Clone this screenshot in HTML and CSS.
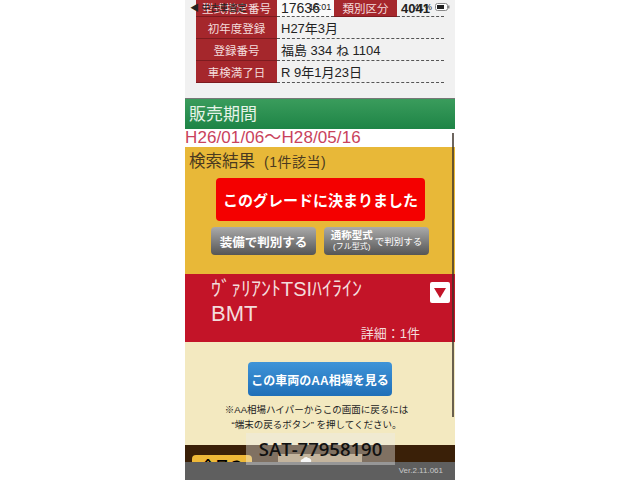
FILE: index.html
```html
<!DOCTYPE html>
<html lang="ja">
<head>
    <meta charset="UTF-8">
    <title>検索結果</title>
    <link rel="stylesheet" href="styles.css">
</head>
<body>
    <div class="phone">
        <!-- ステータスバー -->
        <div class="status">
            <span class="status-left">&#9664; 中古車査定</span>
            <span class="status-time">16:01</span>
            <span class="status-right">41%
                <svg class="battery" width="15" height="8" viewBox="0 0 15 8"><rect x="0.5" y="0.5" width="12" height="7" rx="2" fill="#fff" stroke="#888"/><rect x="2" y="2" width="7" height="4" fill="#222"/><rect x="13" y="2.5" width="1.5" height="3" fill="#888"/></svg>
            </span>
        </div>

        <!-- 車両情報 -->
        <div class="info">
            <div class="info-row info-first">
                <div class="info-label">型式指定番号</div>
                <div class="info-value info-short">17636</div>
                <div class="info-label info-label-2">類別区分</div>
                <div class="info-value info-num">4041</div>
            </div>
            <div class="info-row">
                <div class="info-label">初年度登録</div>
                <div class="info-value">H27年3月</div>
            </div>
            <div class="info-row">
                <div class="info-label">登録番号</div>
                <div class="info-value">福島 334 ね 1104</div>
            </div>
            <div class="info-row">
                <div class="info-label">車検満了日</div>
                <div class="info-value">R 9年1月23日</div>
            </div>
        </div>

        <h2 class="period-head">販売期間</h2>
        <div class="period">H26/01/06～H28/05/16</div>

        <!-- 検索結果 -->
        <div class="result">
            <div class="result-title">検索結果<small>(1件該当)</small></div>
            <button class="btn-decide">このグレードに決まりました</button>
            <div class="btn-row">
                <button class="btn-gray btn-equip">装備で判別する</button>
                <button class="btn-gray btn-type">
                    <span class="type-stack"><b>通称型式</b><small>(フル型式)</small></span>で判別する
                </button>
            </div>
        </div>

        <!-- グレード -->
        <div class="grade">
            <div class="grade-name">ｳﾞｧﾘｱﾝﾄTSIﾊｲﾗｲﾝ</div>
            <div class="grade-sub">BMT</div>
            <div class="grade-count">詳細：1件</div>
            <span class="grade-toggle"><svg width="14" height="12" viewBox="0 0 14 12"><path d="M1 1h12L7 11z" fill="#c31428"/></svg></span>
        </div>

        <div class="market">
            <button class="btn-market">この車両のAA相場を見る</button>
            <p class="market-note">※AA相場ハイパーからこの画面に戻るには<br>“端末の戻るボタン” を押してください。</p>
        </div>

        <!-- 下のメニュー -->
        <div class="bottom-brown">
            <span class="bottom-tab">今日の</span>
            <span class="bottom-center">
                <svg width="12" height="7" viewBox="0 0 12 7"><path d="M1 6c-1-2 1-3 2-3 1-2 4-3 5-1 2 0 4 2 3 4z" fill="#fff"/></svg>
            </span>
        </div>
        <div class="bottom-gray">Ver.2.11.061</div>
        <div class="scrollbar"></div>
        <div class="stamp">SAT-77958190</div>
    </div>
</body>
</html>
```

FILE: styles.css
```css
body {
    margin: 0;
    background-color: #fff;
    font-family: "Liberation Sans", "Noto Sans CJK JP", sans-serif;
}
.phone {
    position: relative;
    width: 270px;
    height: 480px;
    margin-left: 185px;
    overflow: hidden;
    background-color: #f1f1f1;
}
.status {
    position: absolute;
    top: 0;
    left: 0;
    right: 0;
    height: 14px;
    display: grid;
    grid-template-columns: 1fr auto 1fr;
    align-items: center;
    font-size: 9px;
    color: #222;
    z-index: 2;
}
.status-left {
    margin-left: 5px;
    white-space: nowrap;
}
.status-right {
    display: flex;
    align-items: center;
    justify-content: flex-end;
    gap: 3px;
    margin-right: 5px;
}
.info {
    height: 98px;
    padding: 0 11px;
    box-sizing: border-box;
}
.info-row {
    display: flex;
    height: 22px;
    font-size: 12px;
}
.info-first {
    height: 17px;
}
.info-label {
    width: 81px;
    flex: none;
    box-sizing: border-box;
    display: flex;
    align-items: center;
    justify-content: center;
    background-color: #a5272c;
    color: #f3dcdc;
    font-size: 11.5px;
    border-bottom: 1px solid #7c1b1f;
}
.info-label-2 {
    width: 63px;
}
.info-value {
    flex: 1;
    display: flex;
    align-items: center;
    padding-left: 4px;
    color: #222;
    font-size: 13px;
    border-bottom: 1px dashed #555;
}
.info-short {
    flex: none;
    width: 53px;
    background-color: #fafafa;
    font-size: 14px;
}
.info-num {
    font-weight: bold;
    padding-left: 4px;
}
.period-head {
    margin: 0;
    height: 30px;
    line-height: 32px;
    padding-left: 4px;
    border-top: 1px solid #777;
    background: linear-gradient(#3a9c5c, #1e8446);
    color: #e6f3e8;
    font-size: 17px;
    font-weight: normal;
}
.period {
    height: 18px;
    line-height: 18px;
    background-color: #fff;
    color: #c9425c;
    font-size: 17px;
    letter-spacing: 0.1px;
    white-space: nowrap;
}
.result {
    height: 127px;
    background-color: #e8b838;
    overflow: hidden;
}
.result-title {
    margin: 4px 0 0 4px;
    font-size: 16.5px;
    line-height: 20px;
    color: #4a3a20;
}
.result-title small {
    margin-left: 9px;
    font-size: 14px;
    letter-spacing: 0.5px;
}
button {
    font-family: inherit;
    border: none;
    padding: 0;
}
.btn-decide {
    display: block;
    width: 209px;
    height: 43px;
    margin: 6px 0 0 31px;
    border-radius: 4px;
    background-color: #f40000;
    color: #fff;
    font-size: 15px;
    font-weight: bold;
}
.btn-row {
    display: flex;
    gap: 8px;
    margin: 6px 0 0 26px;
}
.btn-gray {
    height: 28px;
    border-radius: 4px;
    background: linear-gradient(#aaa, #555);
    color: #fff;
    font-size: 12.5px;
    font-weight: bold;
    display: flex;
    align-items: center;
    justify-content: center;
}
.btn-equip {
    width: 105px;
}
.btn-type {
    width: 105px;
    gap: 2px;
    font-size: 9.5px;
    font-weight: normal;
}
.type-stack {
    display: flex;
    flex-direction: column;
    align-items: center;
    line-height: 11px;
}
.type-stack b {
    font-size: 10.5px;
}
.type-stack small {
    font-size: 8px;
}
.grade {
    position: relative;
    height: 68px;
    background-color: #c31428;
    color: #f3dcdc;
}
.grade-name {
    padding: 3px 0 0 26px;
    font-size: 20px;
    line-height: 24px;
    white-space: nowrap;
}
.grade-sub {
    padding-left: 26px;
    font-size: 22px;
    line-height: 25px;
}
.grade-count {
    position: absolute;
    right: 35px;
    bottom: 0;
    font-size: 13px;
}
.grade-toggle {
    position: absolute;
    top: 8px;
    right: 5px;
    width: 20px;
    height: 21px;
    border-radius: 2px;
    background-color: #fff;
    display: flex;
    align-items: center;
    justify-content: center;
}
.market {
    height: 103px;
    background-color: #f3e9c0;
    text-align: center;
    overflow: hidden;
}
.btn-market {
    display: block;
    width: 144px;
    height: 34px;
    margin: 20px 0 0 63px;
    border-radius: 4px;
    background: linear-gradient(#3f94d8, #1f6fb8);
    color: #fff;
    font-size: 12px;
    font-weight: bold;
}
.market-note {
    margin: 6px 0 0;
    padding-right: 7px;
    font-size: 9.5px;
    line-height: 15px;
    color: #222;
}
.bottom-brown {
    position: relative;
    height: 17px;
    background-color: #3a2008;
    overflow: hidden;
}
.bottom-tab {
    display: block;
    width: 60px;
    height: 30px;
    margin: 10px 0 0 7px;
    border-radius: 4px;
    background-color: #eeb838;
    font-size: 14px;
    font-weight: bold;
    line-height: 22px;
    text-align: center;
}
.bottom-center {
    position: absolute;
    left: 93px;
    top: 9px;
    width: 62px;
    height: 8px;
    padding-left: 22px;
    background-color: #a8906a;
    line-height: 8px;
}
.bottom-gray {
    height: 18px;
    padding-right: 12px;
    background-color: #5f5f5f;
    color: #c8c8c8;
    font-size: 8px;
    line-height: 18px;
    text-align: right;
}
.scrollbar {
    position: absolute;
    top: 133px;
    right: 1px;
    width: 2px;
    height: 284px;
    background-color: rgba(60, 50, 40, 0.75);
}
.stamp {
    position: absolute;
    left: 61px;
    top: 433px;
    width: 149px;
    height: 32px;
    background-color: rgba(235, 235, 235, 0.4);
    color: #111;
    font-family: "Open Sans", sans-serif;
    font-size: 18.5px;
    font-weight: 600;
    line-height: 32px;
    text-align: center;
}
```
